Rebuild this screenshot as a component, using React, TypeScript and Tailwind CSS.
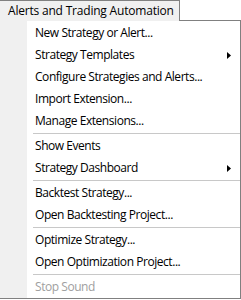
import React from 'react';

type Item = { label?: string; sub?: boolean; disabled?: boolean; sep?: boolean };

const items: Item[] = [
  { label: 'New Strategy or Alert...' },
  { label: 'Strategy Templates', sub: true },
  { label: 'Configure Strategies and Alerts...' },
  { label: 'Import Extension...' },
  { label: 'Manage Extensions...' },
  { sep: true },
  { label: 'Show Events' },
  { label: 'Strategy Dashboard', sub: true },
  { sep: true },
  { label: 'Backtest Strategy...' },
  { label: 'Open Backtesting Project...' },
  { sep: true },
  { label: 'Optimize Strategy...' },
  { label: 'Open Optimization Project...' },
  { sep: true },
  { label: 'Stop Sound', disabled: true },
];

const App = () => {
  return (
    <div className="w-[241px] h-[300px] bg-white text-[12px] text-black" style={{ fontFamily: '"Open Sans", "Liberation Sans", sans-serif' }}>
      <div className="flex h-[21px]">
        <div className="w-[180px] h-[21px] bg-[#f0f0f0] border-t border-r border-[#808080] pl-[8px] leading-[19px] tracking-[-0.2px]">
          Alerts and Trading Automation
        </div>
        <div className="flex-1 border-b border-[#808080] bg-white" />
      </div>
      <div className="flex w-[241px] border-r border-b border-[#808080]">
        <div className="w-[27px] bg-[#f0f0f0] shrink-0" />
        <div className="flex-1 flex flex-col pt-[1px] bg-white">
          {items.map((it, i) =>
            it.sep ? (
              <div key={i} className="h-[3px] flex items-center pl-[6px]">
                <div className="h-px w-full bg-[#c8c8c8]" />
              </div>
            ) : (
              <div key={i} className="h-[22px] flex items-center pl-[8px] pr-[8px] tracking-[-0.45px]">
                <span className={it.disabled ? 'text-[#a0a0a0]' : ''}>{it.label}</span>
                {it.sub && (
                  <svg className="ml-auto mr-[1px]" width="4" height="7" viewBox="0 0 4 7">
                    <path d="M0 0 L4 3.5 L0 7 Z" fill="#000" />
                  </svg>
                )}
              </div>
            )
          )}
        </div>
      </div>
    </div>
  );
};

export default App;
